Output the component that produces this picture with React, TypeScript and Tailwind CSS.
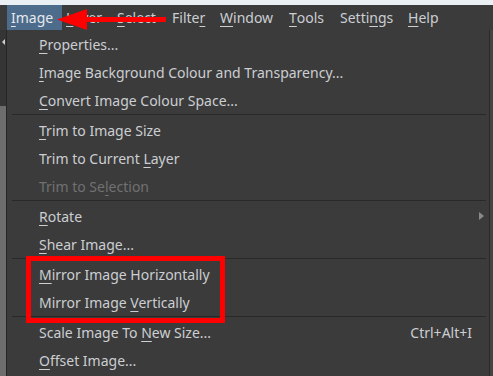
import React from "react";

const font = { fontFamily: '"Noto Sans", "Open Sans", sans-serif' };

function U({ text, idx }: { text: string; idx: number }) {
  if (idx < 0) return <>{text}</>;
  return (
    <>
      {text.slice(0, idx)}
      <span className="underline underline-offset-[3px] decoration-1">{text[idx]}</span>
      {text.slice(idx + 1)}
    </>
  );
}

type Item =
  | { sep: true }
  | { label: string; u: number; disabled?: boolean; sub?: boolean; shortcut?: string };

const items: Item[] = [
  { label: "Properties...", u: 0 },
  { label: "Image Background Colour and Transparency...", u: 0 },
  { label: "Convert Image Colour Space...", u: 0 },
  { sep: true },
  { label: "Trim to Image Size", u: 0 },
  { label: "Trim to Current Layer", u: 16 },
  { label: "Trim to Selection", u: 10, disabled: true },
  { sep: true },
  { label: "Rotate", u: 0, sub: true },
  { label: "Shear Image...", u: 0 },
  { sep: true },
  { label: "Mirror Image Horizontally", u: 0 },
  { label: "Mirror Image Vertically", u: 13 },
  { sep: true },
  { label: "Scale Image To New Size...", u: 15, shortcut: "Ctrl+Alt+I" },
  { label: "Offset Image...", u: 0 },
];

const bar = [
  { t: "Image", u: 0, w: "w-[55px]", active: true },
  { t: "Layer", u: 0, w: "w-[51px]" },
  { t: "Select", u: 0, w: "w-[55px]" },
  { t: "Filter", u: 5, w: "w-[48px]" },
  { t: "Window", u: 0, w: "w-[69px]" },
  { t: "Tools", u: 0, w: "w-[51px]" },
  { t: "Settings", u: 5, w: "w-[68px]" },
  { t: "Help", u: 0, w: "w-[40px]" },
];

export default function App() {
  return (
    <div className="relative w-[493px] h-[376px] overflow-hidden bg-[#3b3b3b] flex flex-col" style={font}>
      <div className="h-[5px] bg-[#e9eff3]" />
      <div className="h-[25px] flex pl-[7px] bg-[#3b3b3b] text-[14px] text-[#cbced2]">
        {bar.map((b) => (
          <div
            key={b.t}
            className={`${b.w} flex items-center pl-[4px] ${b.active ? "bg-[#4d6c8b] text-[#e6e9ec]" : ""}`}
          >
            <U text={b.t} idx={b.u} />
          </div>
        ))}
      </div>
      <div className="flex flex-1">
        <div className="w-[6px] flex flex-col">
          <div className="h-[76px] bg-[#353535] relative">
            <div className="absolute left-[2px] top-[9px] w-0 h-0 border-y-[3px] border-y-transparent border-r-[3px] border-r-[#d0d0d0]" />
          </div>
          <div className="flex-1 bg-[#6d6d6d]" />
        </div>
        <div className="flex-1 border-l border-l-[#262626] border-r border-r-[#2a2a2a] bg-[#3b3b3b] text-[14px] text-[#cbced2]">
          {items.map((it, i) =>
            "sep" in it ? (
              <div key={i} className="h-[2px] ml-[5px] mr-[3px]">
                <div className="h-[1px] bg-[#292929]" />
              </div>
            ) : (
              <div key={i} className="h-[28px] flex items-center pl-[32px] pr-[17px]">
                <span className={it.disabled ? "text-[#717171]" : ""}>
                  <U text={it.label} idx={it.u} />
                </span>
                <div className="flex-1" />
                {it.shortcut && <span>{it.shortcut}</span>}
                {it.sub && (
                  <div className="w-0 h-0 border-y-[4px] border-y-transparent border-l-[5px] border-l-[#8a8a8a] -mr-[12px]" />
                )}
              </div>
            )
          )}
        </div>
        <div className="w-[3px] bg-[#444444]" />
      </div>
      <div className="absolute left-[26px] top-[256px] w-[199px] h-[67px] border-[5px] border-[#ff0000]" />
      <svg className="absolute left-0 top-0" width="200" height="40" viewBox="0 0 200 40">
        <rect x="80" y="17" width="86" height="5" fill="#ff0000" />
        <polygon points="57,19.5 87,9 87,30" fill="#ff0000" />
      </svg>
    </div>
  );
}
